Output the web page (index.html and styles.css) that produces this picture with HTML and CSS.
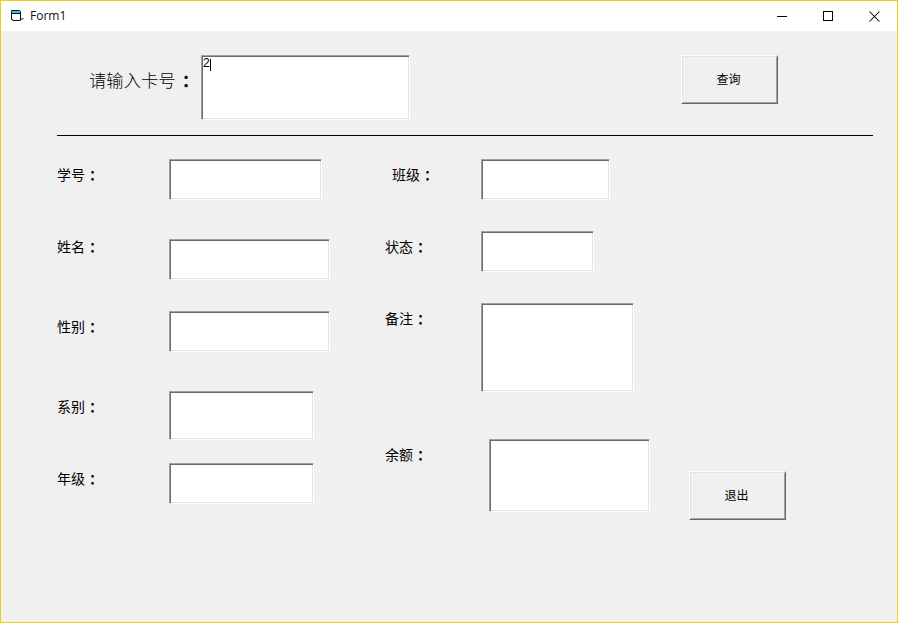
FILE: index.html
```html
<!DOCTYPE html>
<html lang="zh-CN">
<head>
<meta charset="utf-8">
<title>Form1</title>
<link rel="stylesheet" href="styles.css">
</head>
<body>
<div class="window">
  <header class="titlebar">
    <svg class="app-icon" width="16" height="16" viewBox="0 0 16 16">
      <path d="M1.5 3.5V2.5H9.5V3.5H10.5V12.5H2.5V11.5H1.5Z" fill="#fff" stroke="#111"/>
      <rect x="2" y="3" width="8" height="2" fill="#19d3e0"/>
      <path d="M2 5.5H10" stroke="#111"/>
      <path d="M11 10.5H14M11 11.5H13" stroke="#8a8a8a"/>
    </svg>
    <span class="title">Form1</span>
    <div class="controls">
      <span class="ctl"><svg width="10" height="10" viewBox="0 0 10 10"><path d="M0 5.5H10" stroke="#000"/></svg></span>
      <span class="ctl"><svg width="10" height="10" viewBox="0 0 10 10"><rect x=".5" y=".5" width="9" height="9" fill="none" stroke="#000"/></svg></span>
      <span class="ctl"><svg width="11" height="11" viewBox="0 0 11 11"><path d="M.5 .5L10.5 10.5M10.5 .5L.5 10.5" stroke="#000" stroke-width="1.05"/></svg></span>
    </div>
  </header>
  <main class="form">
    <section class="query">
      <label class="query-label">请输入卡号<span class="colon">：</span></label>
      <div class="box query-box"><span class="typed">2</span><span class="caret"></span></div>
      <button class="btn query-btn">查询</button>
    </section>
    <hr class="rule">
    <section class="fields">
      <div class="col col-left">
        <div class="field f-no"><label>学号<span class="colon">：</span></label><input class="box w152 h40"></div>
        <div class="field f-name"><label>姓名<span class="colon">：</span></label><input class="box w160 h40"></div>
        <div class="field f-sex"><label>性别<span class="colon">：</span></label><input class="box w160 h40"></div>
        <div class="field f-dept"><label>系别<span class="colon">：</span></label><input class="box w144 h48"></div>
        <div class="field f-grade"><label>年级<span class="colon">：</span></label><input class="box w144 h40"></div>
      </div>
      <div class="col col-right">
        <div class="field f-class"><label>班级<span class="colon">：</span></label><input class="box w128 h40"></div>
        <div class="field f-state"><label>状态<span class="colon">：</span></label><input class="box w112 h40"></div>
        <div class="field f-note"><label>备注<span class="colon">：</span></label><textarea class="box w152 h88"></textarea></div>
        <div class="field f-balance"><label>余额<span class="colon">：</span></label><textarea class="box w160 h72"></textarea><button class="btn exit-btn">退出</button></div>
      </div>
    </section>
  </main>
</div>
</body>
</html>
```
FILE: styles.css
```css
* { box-sizing: border-box; }
html, body { margin: 0; height: 100%; }
body { font-family: "Noto Sans CJK SC", "Liberation Sans", sans-serif; color: #000; }

.window {
  width: 898px;
  height: 623px;
  border: 1px solid #e6d312;
  background: #f0f0f0;
  display: flex;
  flex-direction: column;
}

.titlebar {
  height: 30px;
  background: #fff;
  display: flex;
  align-items: center;
  flex: none;
}
.app-icon { margin-left: 9px; flex: none; }
.title {
  margin-left: 4px;
  padding-bottom: 2px;
  font: 400 12px "Open Sans", "Liberation Sans", sans-serif;
  color: #111;
}
.controls { margin-left: auto; display: flex; }
.ctl {
  width: 46px;
  height: 30px;
  display: flex;
  align-items: center;
  justify-content: center;
}

.form { padding: 24px 24px 0 56px; flex: 1; }

/* Full-width colon sits centred in its em box on the original system font */
.colon { margin-left: 4px; font-weight: 700; }

/* The sunken edge overhangs its slot by one pixel on the right and bottom */
.box {
  display: block;
  padding: 0;
  margin: 0 -1px -1px 0;
  flex: none;
  resize: none;
  outline: none;
  background: #fff;
  border: 1px solid;
  border-color: #a0a0a0 #fff #fff #a0a0a0;
  box-shadow: inset 1px 1px 0 #696969, inset -1px -1px 0 #e3e3e3;
  border-radius: 0;
}
.w112 { width: 113px; }
.w128 { width: 129px; }
.w144 { width: 145px; }
.w152 { width: 153px; }
.w160 { width: 161px; }
.h40 { height: 41px; }
.h48 { height: 49px; }
.h72 { height: 73px; }
.h88 { height: 89px; }

.btn {
  width: 97px;
  height: 49px;
  padding: 0 2px 2px 0;
  flex: none;
  background: #f0f0f0;
  border: 1px solid;
  border-color: #fff #696969 #696969 #fff;
  box-shadow: inset 1px 1px 0 #e3e3e3, inset -1px -1px 0 #a0a0a0;
  border-radius: 0;
  font: 400 12px "Noto Sans CJK SC", sans-serif;
  color: #000;
}

.query { display: flex; align-items: flex-start; height: 64px; }
.query-label {
  width: 112px;
  margin-left: 32px;
  flex: none;
  margin-top: 13px;
  font-size: 17.33px;
  font-weight: 300;
  line-height: 24px;
  white-space: nowrap;
  color: #000;
}
.query-label .colon { margin-left: 6px; }
.query-box {
  width: 209px;
  height: 65px;
  padding: 1px 0 0 1px;
  display: flex;
  align-items: flex-start;
  font: 400 12px/12px "Liberation Sans", sans-serif;
}
.caret { width: 1px; height: 12px; background: #000; margin-top: 2px; }
.query-btn { margin-left: 272px; }

.rule {
  width: 816px;
  height: 1px;
  margin: 16px 0 0;
  border: 0;
  background: #000;
}

.fields { display: flex; margin-top: 23px; }
.col { display: flex; flex-direction: column; align-items: flex-start; }
.col-left { width: 328px; }

.field { display: flex; align-items: flex-start; }
.field label {
  flex: none;
  width: 112px;
  margin-top: 8px;
  font-size: 14px;
  line-height: 14px;
  white-space: nowrap;
}

.f-name { margin-top: 40px; }
.f-name label { margin-top: 0; }
.f-sex { margin-top: 32px; }
.f-dept { margin-top: 40px; }
.f-grade { margin-top: 24px; }

.field.f-class label { width: 89px; margin-left: 7px; }
.f-state { margin-top: 32px; }
.field.f-state label { width: 96px; margin-top: 8px; }
.f-note { margin-top: 32px; }
.field.f-note label { width: 96px; }
.f-balance { margin-top: 48px; }
.field.f-balance label { width: 104px; margin-top: 8px; }
.exit-btn { margin-left: 40px; margin-top: 32px; }
```
